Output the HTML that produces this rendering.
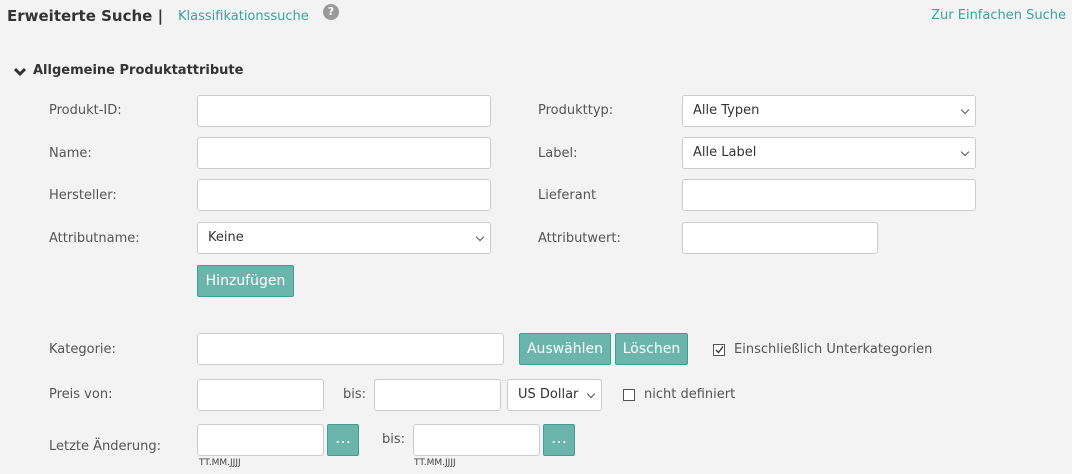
<!DOCTYPE html>
<html><head><meta charset="utf-8"><style>
body{margin:0;width:1072px;height:474px;background:#f3f3f3;font-family:"DejaVu Sans","Liberation Sans",sans-serif;font-size:13px;color:#555;position:relative;overflow:hidden}
.a{position:absolute}
.in{position:absolute;background:#fff;border:1px solid #ccc;border-radius:3px;box-sizing:border-box;height:32px}
.sel{position:absolute;background:#fff;border:1px solid #ccc;border-radius:3px;box-sizing:border-box;height:32px;color:#333;padding:0 10px;line-height:30px}
.sel:after{content:"";position:absolute;right:7px;top:11px;width:5px;height:5px;border-right:1.3px solid #555;border-bottom:1.3px solid #555;transform:rotate(45deg)}
.btn{position:absolute;background:#6cb5ad;border:1px solid #3f9f96;border-radius:2px;box-sizing:border-box;color:#fff;text-align:center;height:32px;line-height:30px;font-size:14px}
.lbl{position:absolute;line-height:16px}
.cb{position:absolute;width:12px;height:12px;border:1px solid #555;background:#fff;box-sizing:border-box}
.hint{position:absolute;font-size:9px;color:#444}
</style></head><body>
<div class="a" style="left:7px;top:7px;font-weight:bold;font-size:15px;color:#333">Erweiterte Suche |</div>
<div class="a" style="left:178px;top:9px;color:#3aa39b;font-size:13px">Klassifikationssuche</div>
<div class="a" style="left:323px;top:4px;width:16px;height:16px;border-radius:50%;background:#999;color:#fff;font-size:11px;font-weight:bold;text-align:center;line-height:16px">?</div>
<div class="a" style="right:6px;top:8px;color:#3aa39b;font-size:13px">Zur Einfachen Suche</div>
<svg class="a" style="left:13px;top:67px" width="14" height="10"><path d="M2 2 L7 7 L12 2" stroke="#333" stroke-width="3" fill="none"/></svg>
<div class="a" style="left:33px;top:63px;font-weight:bold;color:#333;font-size:13px">Allgemeine Produktattribute</div>

<div class="lbl" style="left:49px;top:103px">Produkt-ID:</div><div class="in" style="left:197px;top:95px;width:294px"></div>
<div class="lbl" style="left:538px;top:103px">Produkttyp:</div><div class="sel" style="left:682px;top:95px;width:294px">Alle Typen</div>
<div class="lbl" style="left:49px;top:146px">Name:</div><div class="in" style="left:197px;top:137px;width:294px"></div>
<div class="lbl" style="left:538px;top:146px">Label:</div><div class="sel" style="left:682px;top:137px;width:294px">Alle Label</div>
<div class="lbl" style="left:49px;top:188px">Hersteller:</div><div class="in" style="left:197px;top:179px;width:294px"></div>
<div class="lbl" style="left:538px;top:188px">Lieferant</div><div class="in" style="left:682px;top:179px;width:294px"></div>
<div class="lbl" style="left:49px;top:231px">Attributname:</div><div class="sel" style="left:197px;top:222px;width:294px">Keine</div>
<div class="lbl" style="left:538px;top:231px">Attributwert:</div><div class="in" style="left:682px;top:222px;width:196px"></div>
<div class="btn" style="left:197px;top:265px;width:97px">Hinzufügen</div>

<div class="lbl" style="left:49px;top:342px">Kategorie:</div><div class="in" style="left:197px;top:333px;width:307px"></div>
<div class="btn" style="left:519px;top:333px;width:92px">Auswählen</div>
<div class="btn" style="left:615px;top:333px;width:73px">Löschen</div>
<div class="cb" style="left:713px;top:344px"></div>
<svg class="a" style="left:714px;top:344px" width="11" height="11"><path d="M2 6 L4.5 8.5 L9 2.5" stroke="#333" stroke-width="1.3" fill="none"/></svg>
<div class="lbl" style="left:734px;top:342px">Einschließlich Unterkategorien</div>

<div class="lbl" style="left:49px;top:387px">Preis von:</div><div class="in" style="left:197px;top:379px;width:127px"></div>
<div class="lbl" style="left:343px;top:387px">bis:</div><div class="in" style="left:374px;top:379px;width:127px"></div>
<div class="sel" style="left:507px;top:379px;width:95px">US Dollar</div>
<div class="cb" style="left:623px;top:389px"></div>
<div class="lbl" style="left:644px;top:387px">nicht definiert</div>

<div class="lbl" style="left:49px;top:439px">Letzte Änderung:</div><div class="in" style="left:197px;top:424px;width:127px"></div>
<div class="btn" style="left:327px;top:424px;width:32px;font-size:16px;line-height:26px">…</div>
<div class="hint" style="left:199px;top:458px">TT.MM.JJJJ</div>
<div class="lbl" style="left:382px;top:432px">bis:</div><div class="in" style="left:413px;top:424px;width:127px"></div>
<div class="btn" style="left:543px;top:424px;width:32px;font-size:16px;line-height:26px">…</div>
<div class="hint" style="left:414px;top:458px">TT.MM.JJJJ</div>
</body></html>
